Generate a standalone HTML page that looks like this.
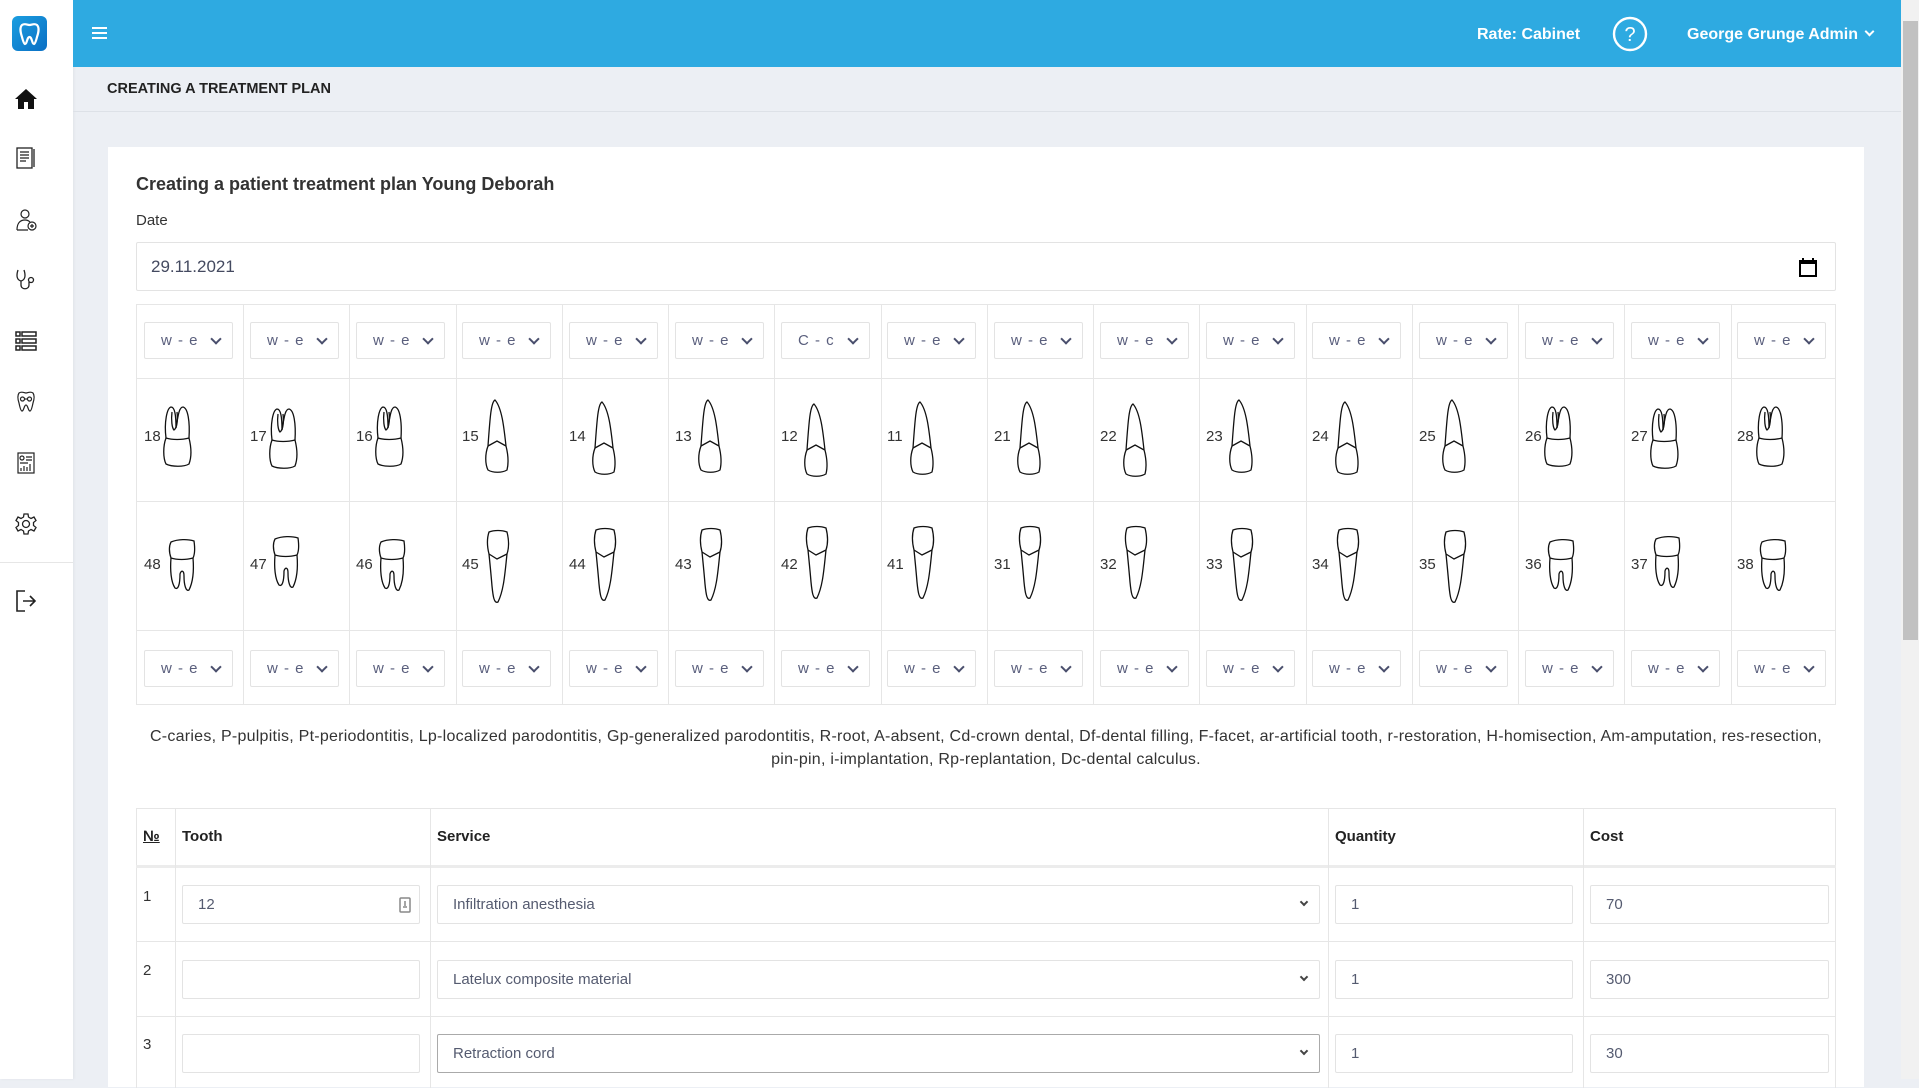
<!DOCTYPE html>
<html><head><meta charset="utf-8">
<style>
*{box-sizing:border-box;margin:0;padding:0}
body{width:1919px;height:1079px;overflow:hidden;background:#eceff4;font-family:"Liberation Sans",sans-serif;color:#212529;position:relative}
.side{position:absolute;left:0;top:0;width:73px;height:1079px;background:#fff;box-shadow:1px 0 3px rgba(0,0,0,.05)}
.logo{position:absolute;left:12px;top:16px;width:35px;height:35px;border-radius:6px;background:linear-gradient(135deg,#1b9ee0,#0a6fc4)}
.sic{position:absolute;left:14px;width:24px;height:24px}
.hdr{position:absolute;left:73px;top:0;width:1828px;height:67px;background:#2eaae1}
.hdr .t{position:absolute;color:#fff;font-weight:bold;font-size:16px;top:26px}
.bc{position:absolute;left:73px;top:67px;width:1828px;height:45px;border-bottom:1px solid #dde1e7}
.bc span{position:absolute;left:34px;top:14px;font-size:14.5px;font-weight:bold;color:#222}
.sb{position:absolute;left:1901px;top:0;width:18px;height:1079px;background:#f1f1f1}
.sb .th{position:absolute;left:2px;top:21px;width:15px;height:619px;background:#c1c1c1}
.card{position:absolute;left:108px;top:147px;width:1756px;height:940px;background:#fff}
.ab{position:absolute}
.grid{position:absolute;left:136px;top:304px;width:1700px;height:401px;border:1px solid #e6e6e6}
.col{position:absolute;top:0;height:100%;border-left:1px solid #e6e6e6}
.hl{position:absolute;left:0;width:100%;border-top:1px solid #e6e6e6}
.sel{position:absolute;width:89px;height:37px;border:1px solid #e3e3e3;border-radius:2px;color:#5a5f7d;font-size:15px;letter-spacing:1px;line-height:35px;padding-left:16px}
.sel:after{content:"";position:absolute;right:12px;top:12px;width:6px;height:6px;border-right:2px solid #4a4f6d;border-bottom:2px solid #4a4f6d;transform:rotate(45deg)}
.num{position:absolute;font-size:15px;color:#333}
.inp{position:absolute;height:39px;border:1px solid #e3e3e3;border-radius:2px;font-size:15px;color:#555b70;line-height:37px;padding-left:15px}
.th2{position:absolute;top:828px;font-size:15px;font-weight:bold;color:#222}
svg.tooth{position:absolute;overflow:visible}
</style></head><body>
<svg width="0" height="0" style="position:absolute">
<defs>
<symbol id="um" viewBox="0 0 40 80"><g fill="none" stroke="#111" stroke-width="1.3">
<path d="M8,36 C6,20 9,6 13,5 C17,5 18,14 18,26 C20,14 21,5 25,5 C30,6 32,20 31,36"/>
<path d="M14,10 C13,18 14,26 16,28 C19,26 20,18 19,10"/>
<path d="M8,36 C5,44 5,56 8,62 C14,65 26,65 31,62 C34,54 33,44 31,36 C24,38 14,38 8,36Z"/></g></symbol>
<symbol id="us" viewBox="0 0 40 80"><g fill="none" stroke="#111" stroke-width="1.3">
<path d="M17,2 C13,4 12,20 10,48 C7,56 7,66 10,72 C15,75 24,75 29,72 C31,64 30,56 28,48 C26,30 24,10 17,2Z"/>
<path d="M10,48 L19,43 L28,48"/></g></symbol>
<symbol id="lm" viewBox="0 0 40 80"><g fill="none" stroke="#111" stroke-width="1.3">
<path d="M9,12 C16,9 26,9 32,11 C33,18 33,24 31,28 C24,30 15,30 9,28 C7,22 7,16 9,12Z"/>
<path d="M9,28 C8,40 9,52 13,58 C16,60 18,55 18,44 C19,40 22,40 22,46 C22,55 24,62 27,60 C31,52 32,40 31,28"/></g></symbol>
<symbol id="ls" viewBox="0 0 40 80"><g fill="none" stroke="#111" stroke-width="1.3">
<path d="M11,6 C16,4 24,4 29,6 C31,14 31,22 29,28 C27,46 26,64 20,76 C16,78 15,70 14,60 C13,48 12,38 11,28 C9,20 9,12 11,6Z"/>
<path d="M11,28 L19,33 L29,28"/></g></symbol>
</defs></svg>

<div class="side">
<div class="logo"><svg width="35" height="35" viewBox="0 0 35 35"><path d="M10,9 C13,7 15,9 17.5,9 C20,9 22,7 25,9 C28,12 26,18 25,21 C24,25 23,28 22,28 C20,28 20,21 17.5,21 C15,21 15,28 13,28 C12,28 11,25 10,21 C9,18 7,12 10,9Z" fill="none" stroke="#fff" stroke-width="2.2"/></svg></div>
<svg class="sic" style="top:87px" viewBox="0 0 24 24"><path d="M12,2 L1,12 L4,12 L4,22 L10,22 L10,15 L14,15 L14,22 L20,22 L20,12 L23,12Z" fill="#111"/></svg>
<svg class="sic" style="top:146px" viewBox="0 0 24 24" fill="none" stroke="#222" stroke-width="1.3"><rect x="3" y="2" width="15" height="20"/><path d="M20,3 V21 M6,6 H15 M6,9 H15 M6,12 H15 M6,15 H12"/></svg>
<svg class="sic" style="top:208px" viewBox="0 0 24 24" fill="none" stroke="#222" stroke-width="1.2"><circle cx="11" cy="6" r="4"/><path d="M3,22 C3,14 7,12 11,12 C13,12 15,13 16,14 M3,22 H14"/><circle cx="18" cy="18" r="4"/><path d="M18,16 V20 M16,18 H20"/></svg>
<svg class="sic" style="top:268px" viewBox="0 0 24 24" fill="none" stroke="#222" stroke-width="1.3"><path d="M4,2 C2,8 3,12 7,13 C11,12 12,8 10,2 M7,13 V17 C7,22 15,22 15,17 V14"/><circle cx="17" cy="12" r="2.5"/></svg>
<svg class="sic" style="top:329px" viewBox="0 0 24 24" fill="none" stroke="#222" stroke-width="1.5"><rect x="2" y="3" width="4" height="4"/><rect x="2" y="10" width="4" height="4"/><rect x="2" y="17" width="4" height="4"/><rect x="8" y="3" width="14" height="4"/><rect x="8" y="10" width="14" height="4"/><rect x="8" y="17" width="14" height="4"/></svg>
<svg class="sic" style="top:389px" viewBox="0 0 24 24" fill="none" stroke="#222" stroke-width="1.2"><path d="M5,4 C8,2 10,4 12,4 C14,4 16,2 19,4 C21,7 20,11 19,14 C18,19 17,22 16,22 C14,22 14,16 12,16 C10,16 10,22 8,22 C7,22 6,19 5,14 C4,11 3,7 5,4Z"/><circle cx="8.5" cy="10" r="2"/><circle cx="15.5" cy="10" r="2"/><path d="M10.5,10 H13.5"/></svg>
<svg class="sic" style="top:451px" viewBox="0 0 24 24" fill="none" stroke="#222" stroke-width="1.2"><rect x="4" y="2" width="16" height="20"/><circle cx="8" cy="7" r="2"/><path d="M12,6 H18 M12,9 H18 M6,12 H14 M7,20 V17 M10,20 V15 M13,20 V16 M16,20 V13"/></svg>
<svg class="sic" style="top:512px" viewBox="0 0 24 24" fill="none" stroke="#222" stroke-width="1.3"><circle cx="12" cy="12" r="3.5"/><path d="M10,2 H14 L14.5,5 L17,6.5 L20,5 L22,8.5 L19.5,10.5 V13.5 L22,15.5 L20,19 L17,17.5 L14.5,19 L14,22 H10 L9.5,19 L7,17.5 L4,19 L2,15.5 L4.5,13.5 V10.5 L2,8.5 L4,5 L7,6.5 L9.5,5Z"/></svg>
<div style="position:absolute;left:0;top:562px;width:73px;border-top:1px solid #e6e6e6"></div>
<svg class="sic" style="top:589px" viewBox="0 0 24 24" fill="none" stroke="#222" stroke-width="1.6"><path d="M11,2 H3 V22 H11 M9,12 H21 M16,7 L21,12 L16,17"/></svg>
</div>

<div class="hdr">
<div style="position:absolute;left:19px;top:27px;width:15px;height:2px;background:#fff;box-shadow:0 5px 0 #fff,0 10px 0 #fff"></div>
<div class="t" style="left:1404px">Rate: Cabinet</div>
<svg style="position:absolute;left:1539px;top:16px" width="36" height="36" viewBox="0 0 36 36"><circle cx="18" cy="18" r="16" fill="none" stroke="#fff" stroke-width="2.4"/><text x="18" y="25" text-anchor="middle" font-family="Liberation Sans" font-size="20" fill="#fff">?</text></svg>
<div class="t" style="left:1614px">George Grunge Admin</div>
<div style="position:absolute;left:1793px;top:28px;width:7px;height:7px;border-right:2.5px solid #fff;border-bottom:2.5px solid #fff;transform:rotate(45deg)"></div>
</div>
<div class="bc"><span>CREATING A TREATMENT PLAN</span></div>
<div class="sb"><div class="th"></div></div>

<div class="card"></div>
<div class="ab" style="left:136px;top:174px;font-size:18px;font-weight:bold;color:#333">Creating a patient treatment plan Young Deborah</div>
<div class="ab" style="left:136px;top:212px;font-size:15px;color:#333">Date</div>
<div class="ab" style="left:136px;top:242px;width:1700px;height:49px;border:1px solid #e3e3e3;border-radius:2px"></div>
<div class="ab" style="left:151px;top:257px;font-size:17px;color:#444a60">29.11.2021</div>
<svg class="ab" style="left:1799px;top:258px" width="18" height="19" viewBox="0 0 18 19"><rect x="1" y="3" width="16" height="15" fill="none" stroke="#000" stroke-width="2"/><rect x="1" y="3" width="16" height="3" fill="#000"/><path d="M4,0 V3 M14,0 V3" stroke="#000" stroke-width="2"/></svg>

<div class="grid">
<div class="hl" style="top:73px"></div><div class="hl" style="top:196px"></div><div class="hl" style="top:325px"></div>
<div class="col" style="left:106px"></div><div class="col" style="left:212px"></div><div class="col" style="left:319px"></div><div class="col" style="left:425px"></div><div class="col" style="left:531px"></div><div class="col" style="left:637px"></div><div class="col" style="left:744px"></div><div class="col" style="left:850px"></div><div class="col" style="left:956px"></div><div class="col" style="left:1062px"></div><div class="col" style="left:1169px"></div><div class="col" style="left:1275px"></div><div class="col" style="left:1381px"></div><div class="col" style="left:1487px"></div><div class="col" style="left:1594px"></div>
</div>

<div class="sel" style="left:144px;top:322px">w - e</div>
<div class="sel" style="left:250px;top:322px">w - e</div>
<div class="sel" style="left:356px;top:322px">w - e</div>
<div class="sel" style="left:462px;top:322px">w - e</div>
<div class="sel" style="left:569px;top:322px">w - e</div>
<div class="sel" style="left:675px;top:322px">w - e</div>
<div class="sel" style="left:781px;top:322px">C - c</div>
<div class="sel" style="left:887px;top:322px">w - e</div>
<div class="sel" style="left:994px;top:322px">w - e</div>
<div class="sel" style="left:1100px;top:322px">w - e</div>
<div class="sel" style="left:1206px;top:322px">w - e</div>
<div class="sel" style="left:1312px;top:322px">w - e</div>
<div class="sel" style="left:1419px;top:322px">w - e</div>
<div class="sel" style="left:1525px;top:322px">w - e</div>
<div class="sel" style="left:1631px;top:322px">w - e</div>
<div class="sel" style="left:1737px;top:322px">w - e</div>
<div class="sel" style="left:144px;top:650px">w - e</div>
<div class="sel" style="left:250px;top:650px">w - e</div>
<div class="sel" style="left:356px;top:650px">w - e</div>
<div class="sel" style="left:462px;top:650px">w - e</div>
<div class="sel" style="left:569px;top:650px">w - e</div>
<div class="sel" style="left:675px;top:650px">w - e</div>
<div class="sel" style="left:781px;top:650px">w - e</div>
<div class="sel" style="left:887px;top:650px">w - e</div>
<div class="sel" style="left:994px;top:650px">w - e</div>
<div class="sel" style="left:1100px;top:650px">w - e</div>
<div class="sel" style="left:1206px;top:650px">w - e</div>
<div class="sel" style="left:1312px;top:650px">w - e</div>
<div class="sel" style="left:1419px;top:650px">w - e</div>
<div class="sel" style="left:1525px;top:650px">w - e</div>
<div class="sel" style="left:1631px;top:650px">w - e</div>
<div class="sel" style="left:1737px;top:650px">w - e</div>

<div class="num" style="left:144px;top:428px">18</div><svg class="tooth" style="left:158px;top:402px" width="40" height="80"><use href="#um"/></svg>
<div class="num" style="left:250px;top:428px">17</div><svg class="tooth" style="left:264px;top:404px" width="40" height="80"><use href="#um"/></svg>
<div class="num" style="left:356px;top:428px">16</div><svg class="tooth" style="left:370px;top:402px" width="40" height="80"><use href="#um"/></svg>
<div class="num" style="left:462px;top:428px">15</div><svg class="tooth" style="left:478px;top:398px" width="40" height="80"><use href="#us"/></svg>
<div class="num" style="left:569px;top:428px">14</div><svg class="tooth" style="left:585px;top:400px" width="40" height="80"><use href="#us"/></svg>
<div class="num" style="left:675px;top:428px">13</div><svg class="tooth" style="left:691px;top:398px" width="40" height="80"><use href="#us"/></svg>
<div class="num" style="left:781px;top:428px">12</div><svg class="tooth" style="left:797px;top:402px" width="40" height="80"><use href="#us"/></svg>
<div class="num" style="left:887px;top:428px">11</div><svg class="tooth" style="left:903px;top:400px" width="40" height="80"><use href="#us"/></svg>
<div class="num" style="left:994px;top:428px">21</div><svg class="tooth" style="left:1010px;top:400px" width="40" height="80"><use href="#us"/></svg>
<div class="num" style="left:1100px;top:428px">22</div><svg class="tooth" style="left:1116px;top:402px" width="40" height="80"><use href="#us"/></svg>
<div class="num" style="left:1206px;top:428px">23</div><svg class="tooth" style="left:1222px;top:398px" width="40" height="80"><use href="#us"/></svg>
<div class="num" style="left:1312px;top:428px">24</div><svg class="tooth" style="left:1328px;top:400px" width="40" height="80"><use href="#us"/></svg>
<div class="num" style="left:1419px;top:428px">25</div><svg class="tooth" style="left:1435px;top:398px" width="40" height="80"><use href="#us"/></svg>
<div class="num" style="left:1525px;top:428px">26</div><svg class="tooth" style="left:1539px;top:402px" width="40" height="80"><use href="#um"/></svg>
<div class="num" style="left:1631px;top:428px">27</div><svg class="tooth" style="left:1645px;top:404px" width="40" height="80"><use href="#um"/></svg>
<div class="num" style="left:1737px;top:428px">28</div><svg class="tooth" style="left:1751px;top:402px" width="40" height="80"><use href="#um"/></svg>
<div class="num" style="left:144px;top:556px">48</div><svg class="tooth" style="left:162px;top:530px" width="40" height="80"><use href="#lm"/></svg>
<div class="num" style="left:250px;top:556px">47</div><svg class="tooth" style="left:266px;top:527px" width="40" height="80"><use href="#lm"/></svg>
<div class="num" style="left:356px;top:556px">46</div><svg class="tooth" style="left:372px;top:530px" width="40" height="80"><use href="#lm"/></svg>
<div class="num" style="left:462px;top:556px">45</div><svg class="tooth" style="left:478px;top:526px" width="40" height="80"><use href="#ls"/></svg>
<div class="num" style="left:569px;top:556px">44</div><svg class="tooth" style="left:585px;top:524px" width="40" height="80"><use href="#ls"/></svg>
<div class="num" style="left:675px;top:556px">43</div><svg class="tooth" style="left:691px;top:524px" width="40" height="80"><use href="#ls"/></svg>
<div class="num" style="left:781px;top:556px">42</div><svg class="tooth" style="left:797px;top:522px" width="40" height="80"><use href="#ls"/></svg>
<div class="num" style="left:887px;top:556px">41</div><svg class="tooth" style="left:903px;top:522px" width="40" height="80"><use href="#ls"/></svg>
<div class="num" style="left:994px;top:556px">31</div><svg class="tooth" style="left:1010px;top:522px" width="40" height="80"><use href="#ls"/></svg>
<div class="num" style="left:1100px;top:556px">32</div><svg class="tooth" style="left:1116px;top:522px" width="40" height="80"><use href="#ls"/></svg>
<div class="num" style="left:1206px;top:556px">33</div><svg class="tooth" style="left:1222px;top:524px" width="40" height="80"><use href="#ls"/></svg>
<div class="num" style="left:1312px;top:556px">34</div><svg class="tooth" style="left:1328px;top:524px" width="40" height="80"><use href="#ls"/></svg>
<div class="num" style="left:1419px;top:556px">35</div><svg class="tooth" style="left:1435px;top:526px" width="40" height="80"><use href="#ls"/></svg>
<div class="num" style="left:1525px;top:556px">36</div><svg class="tooth" style="left:1541px;top:530px" width="40" height="80"><use href="#lm"/></svg>
<div class="num" style="left:1631px;top:556px">37</div><svg class="tooth" style="left:1647px;top:527px" width="40" height="80"><use href="#lm"/></svg>
<div class="num" style="left:1737px;top:556px">38</div><svg class="tooth" style="left:1753px;top:530px" width="40" height="80"><use href="#lm"/></svg>

<div class="ab" style="left:136px;top:725px;width:1700px;text-align:center;font-size:16px;letter-spacing:0.25px;line-height:23px;color:#333">C-caries, P-pulpitis, Pt-periodontitis, Lp-localized parodontitis, Gp-generalized parodontitis, R-root, A-absent, Cd-crown dental, Df-dental filling, F-facet, ar-artificial tooth, r-restoration, H-homisection, Am-amputation, res-resection, pin-pin, i-implantation, Rp-replantation, Dc-dental calculus.</div>

<div class="ab" style="left:136px;top:808px;width:1700px;height:280px;border-top:1px solid #e6e6e6;border-left:1px solid #e6e6e6;border-right:1px solid #e6e6e6"></div>
<div class="ab" style="left:136px;top:865px;width:1700px;border-top:3px solid #ececec"></div>
<div class="ab" style="left:136px;top:941px;width:1700px;border-top:1px solid #e6e6e6"></div>
<div class="ab" style="left:136px;top:1016px;width:1700px;border-top:1px solid #e6e6e6"></div>
<div class="ab" style="left:175px;top:808px;height:280px;border-left:1px solid #e6e6e6"></div>
<div class="ab" style="left:430px;top:808px;height:280px;border-left:1px solid #e6e6e6"></div>
<div class="ab" style="left:1328px;top:808px;height:280px;border-left:1px solid #e6e6e6"></div>
<div class="ab" style="left:1583px;top:808px;height:280px;border-left:1px solid #e6e6e6"></div>
<div class="th2" style="left:143px;text-decoration:underline">№</div>
<div class="th2" style="left:182px">Tooth</div>
<div class="th2" style="left:437px">Service</div>
<div class="th2" style="left:1335px">Quantity</div>
<div class="th2" style="left:1590px">Cost</div>

<div class="num" style="left:143px;top:888px">1</div>
<div class="num" style="left:143px;top:962px">2</div>
<div class="num" style="left:143px;top:1036px">3</div>

<div class="inp" style="left:182px;top:885px;width:238px">12<svg style="position:absolute;right:8px;top:11px" width="12" height="16" viewBox="0 0 12 16"><rect x="1" y="1" width="10" height="14" rx="1" fill="none" stroke="#888" stroke-width="1.5"/><path d="M4,10 H8 M6,4 V9" stroke="#888" stroke-width="1.5"/></svg></div>
<div class="inp" style="left:437px;top:885px;width:883px">Infiltration anesthesia<span style="position:absolute;right:12px;top:13px;width:6px;height:6px;border-right:2px solid #444;border-bottom:2px solid #444;transform:rotate(45deg)"></span></div>
<div class="inp" style="left:1335px;top:885px;width:238px">1</div>
<div class="inp" style="left:1590px;top:885px;width:239px">70</div>

<div class="inp" style="left:182px;top:960px;width:238px"></div>
<div class="inp" style="left:437px;top:960px;width:883px">Latelux composite material<span style="position:absolute;right:12px;top:13px;width:6px;height:6px;border-right:2px solid #444;border-bottom:2px solid #444;transform:rotate(45deg)"></span></div>
<div class="inp" style="left:1335px;top:960px;width:238px">1</div>
<div class="inp" style="left:1590px;top:960px;width:239px">300</div>

<div class="inp" style="left:182px;top:1034px;width:238px"></div>
<div class="inp" style="left:437px;top:1034px;width:883px;border-color:#aaa">Retraction cord<span style="position:absolute;right:12px;top:13px;width:6px;height:6px;border-right:2px solid #444;border-bottom:2px solid #444;transform:rotate(45deg)"></span></div>
<div class="inp" style="left:1335px;top:1034px;width:238px">1</div>
<div class="inp" style="left:1590px;top:1034px;width:239px">30</div>
</body></html>
